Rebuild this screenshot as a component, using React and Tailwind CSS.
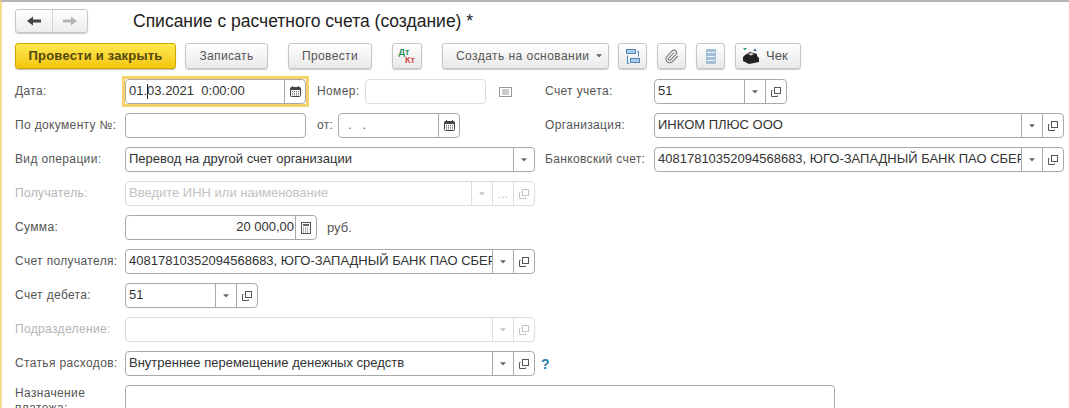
import { Paperclip } from "lucide-react";

const Caret = ({ dim }) => (
  <svg width="6" height="4" viewBox="0 0 6 4">
    <path d="M0 0.3 H6 L3 3.6 Z" fill={dim ? "#c4c4c4" : "#666"} />
  </svg>
);

const OpenIcon = ({ dim }) => (
  <svg width="10" height="10" viewBox="0 0 10 10" fill="none" stroke={dim ? "#c4c4c4" : "#555"}>
    <rect x="3.5" y="0.5" width="6" height="6" />
    <path d="M1.5 3.5 H0.5 V9.5 H6.5 V8.5" />
  </svg>
);

const CalendarIcon = () => (
  <svg width="11" height="11" viewBox="0 0 11 11">
    <rect x="0.5" y="1.5" width="10" height="9" rx="1" fill="#fff" stroke="#444" />
    <rect x="0.5" y="1.5" width="10" height="2.5" fill="#444" />
    <path d="M2.5 0 V2 M8.5 0 V2" stroke="#444" />
    <path d="M2 5.5 H9 M2 7.3 H9 M2 9 H9" stroke="#666" strokeDasharray="1 1" />
  </svg>
);

const CalcIcon = () => (
  <svg width="10" height="12" viewBox="0 0 10 12">
    <rect x="0.5" y="0.5" width="9" height="11" fill="#fff" stroke="#555" />
    <rect x="2" y="2" width="6" height="2" fill="#666" />
    <path d="M2 6 H8 M2 8 H8 M2 10 H8" stroke="#666" strokeDasharray="1 1" />
  </svg>
);

const Seg = ({ children, dim, w = "w-[21px]" }) => (
  <div className={`flex ${w} shrink-0 items-center justify-center border-l ${dim ? "border-[#dcdcdc]" : "border-[#a9a9a9]"}`}>
    {children}
  </div>
);

const Field = ({ w, value, dim, align, placeholder, children }) => (
  <div className={`flex h-[25px] ${w} shrink-0 overflow-hidden rounded-[4px] border bg-white ${dim ? "border-[#dcdcdc]" : "border-[#a9a9a9]"}`}>
    <div className={`min-w-0 flex-1 overflow-hidden whitespace-pre pl-[3px] pr-px text-[13px] leading-[22px] tracking-normal text-[#333] ${align === "right" ? "text-right" : ""}`}>
      {placeholder ? <span className="text-[#c2c2c2]">{placeholder}</span> : value}
    </div>
    {children}
  </div>
);

const Label = ({ w = "w-[110px]", dim, children }) => (
  <div className={`${w} shrink-0 -translate-y-px whitespace-nowrap ${dim ? "text-[#b4b4b4]" : "text-[#555]"}`}>{children}</div>
);

const Row = ({ children }) => <div className="flex h-[25px] items-center">{children}</div>;

const Btn = ({ w, children, cls = "justify-center" }) => (
  <button
    type="button"
    className={`flex h-[26px] ${w} shrink-0 items-center rounded-[3px] border border-[#c6c6c6] bg-gradient-to-b from-white to-[#e9e9e9] text-[#555] shadow-[0_1px_1px_rgba(0,0,0,0.2)] ${cls}`}
  >
    {children}
  </button>
);

const bank = "40817810352094568683, ЮГО-ЗАПАДНЫЙ БАНК ПАО СБЕРБАНК";

export default function App() {
  return (
    <div className="h-[408px] w-[1069px] overflow-hidden border-t-2 border-l-2 border-t-[#b5b5b5] border-l-[#f3dc8c] bg-white font-['Liberation_Sans',sans-serif] text-[12px] tracking-[0.35px]">
      {/* header */}
      <div className="mt-[7px] flex h-[24px] items-center pl-[13px]">
        <div className="flex h-[24px] w-[73px] rounded-[3px] border border-[#c6c6c6] bg-gradient-to-b from-white to-[#ececec] shadow-[0_1px_1px_rgba(0,0,0,0.2)]">
          <div className="flex w-[37px] items-center justify-center border-r border-[#d4d4d4]">
            <svg width="14" height="10" viewBox="0 0 14 10">
              <path d="M0 5 L6 0.5 V3.5 H14 V6.5 H6 V9.5 Z" fill="#444" />
            </svg>
          </div>
          <div className="flex flex-1 items-center justify-center">
            <svg width="14" height="10" viewBox="0 0 14 10">
              <path d="M14 5 L8 0.5 V3.5 H0 V6.5 H8 V9.5 Z" fill="#b5b5b5" />
            </svg>
          </div>
        </div>
        <h1 className="ml-[45px] text-[17.5px] font-normal tracking-normal text-[#222]">Списание с расчетного счета (создание) *</h1>
      </div>

      {/* toolbar */}
      <div className="mt-[10px] flex h-[26px] items-center pl-[13px]">
        <button
          type="button"
          className="flex h-[26px] w-[161px] items-center justify-center rounded-[3px] border border-[#cda800] bg-gradient-to-b from-[#ffe94d] to-[#f3c600] text-[13px] font-bold tracking-[0.2px] text-[#54490d] shadow-[0_1px_1px_rgba(0,0,0,0.25)]"
        >
          Провести и закрыть
        </button>
        <Btn w="w-[83px]" cls="ml-[9px] justify-center">Записать</Btn>
        <Btn w="w-[84px]" cls="ml-[20px] justify-center">Провести</Btn>
        <Btn w="w-[30px]" cls="ml-[20px] justify-center">
          <span className="flex flex-col text-[9px] leading-[8px] tracking-normal">
            <span className="pr-[6px] font-bold text-[#1f8f5c]">Дт</span>
            <span className="pl-[6px] font-bold text-[#d2453d]">Кт</span>
          </span>
        </Btn>
        <Btn w="w-[167px]" cls="ml-[20px] gap-[6px] pl-[13px] tracking-[0.45px]">
          Создать на основании <Caret />
        </Btn>
        <Btn w="w-[29px]" cls="ml-[9px] justify-center">
          <svg width="15" height="15" viewBox="0 0 15 15" fill="none">
            <rect x="1.5" y="0.5" width="9" height="4" fill="#a9cbe6" stroke="#4e86b5" />
            <rect x="5.5" y="9.5" width="9" height="4" fill="#a9cbe6" stroke="#4e86b5" />
            <path d="M2.5 6.5 V14.5 H4 M13.5 7.5 V2.5 H12" stroke="#4e86b5" />
          </svg>
        </Btn>
        <Btn w="w-[29px]" cls="ml-[10px] justify-center">
          <Paperclip size={15} color="#777" strokeWidth={1.7} />
        </Btn>
        <Btn w="w-[29px]" cls="ml-[10px] justify-center">
          <svg width="10" height="15" viewBox="0 0 10 15">
            <rect x="0" y="0" width="10" height="15" rx="1" fill="#a3bfd8" />
            <path d="M1 3.5 H9 M1 7.5 H9 M1 11.5 H9" stroke="#eef4f9" />
          </svg>
        </Btn>
        <Btn w="w-[66px]" cls="ml-[10px] gap-[6px] pl-[6px] text-[13px] tracking-normal">
          <svg width="18" height="17" viewBox="0 0 18 17">
            <path d="M1 0 H5 L3 2.5 Z" fill="#3aa57a" />
            <path d="M11 3 H15 L13 0.5 Z" fill="#3f6f9c" />
            <path d="M3 7 L8 4 L15 6 V8 L17 10 V14 L7 16 L1 13 V9 Z" fill="#222" />
            <path d="M6 6 L9 5 L12 6 L9 7.5 Z" fill="#ddd" />
          </svg>
          Чек
        </Btn>
      </div>

      {/* top part of the form: two columns */}
      <div className="mt-[10px] flex pl-[13px]">
        <div className="flex w-[530px] shrink-0 flex-col gap-[9px]">
          <Row>
            <Label>Дата:</Label>
            <div className="relative outline-[3px] outline-[#f2d46a]">
              <Field w="w-[181px]" value="01.03.2021  0:00:00">
                <Seg>
                  <CalendarIcon />
                </Seg>
              </Field>
              <div className="absolute top-[5px] left-[22px] h-[15px] w-px bg-[#222]" />
            </div>
            <Label w="w-[48px] ml-[11px]">Номер:</Label>
            <Field w="w-[121px]" dim value="" />
            <svg className="ml-[13px]" width="13" height="10" viewBox="0 0 13 10" fill="none" stroke="#999">
              <rect x="0.5" y="0.5" width="12" height="9" />
              <path d="M3 3 H10 M3 5 H10 M3 7 H10" />
            </svg>
          </Row>
          <Row>
            <Label>По документу №:</Label>
            <Field w="w-[181px]" value="" />
            <Label w="w-[21px] ml-[11px]">от:</Label>
            <Field w="w-[122px]" value={<span className="pl-[6px] text-[#666]">.   .</span>}>
              <Seg>
                <CalendarIcon />
              </Seg>
            </Field>
          </Row>
          <Row>
            <Label>Вид операции:</Label>
            <Field w="w-[410px]" value="Перевод на другой счет организации">
              <Seg>
                <Caret />
              </Seg>
            </Field>
          </Row>
        </div>
        <div className="flex flex-col gap-[9px]">
          <Row>
            <Label w="w-[109px]">Счет учета:</Label>
            <Field w="w-[133px]" value="51">
              <Seg>
                <Caret />
              </Seg>
              <Seg>
                <OpenIcon />
              </Seg>
            </Field>
          </Row>
          <Row>
            <Label w="w-[109px]">Организация:</Label>
            <Field w="w-[410px]" value="ИНКОМ ПЛЮС ООО">
              <Seg>
                <Caret />
              </Seg>
              <Seg>
                <OpenIcon />
              </Seg>
            </Field>
          </Row>
          <Row>
            <Label w="w-[109px]">Банковский счет:</Label>
            <Field w="w-[410px]" value={bank}>
              <Seg>
                <Caret />
              </Seg>
              <Seg>
                <OpenIcon />
              </Seg>
            </Field>
          </Row>
        </div>
      </div>

      {/* rest of the form */}
      <div className="mt-[9px] flex flex-col gap-[9px] pl-[13px]">
        <Row>
          <Label dim>Получатель:</Label>
          <Field w="w-[410px]" dim placeholder="Введите ИНН или наименование">
            <Seg dim>
              <Caret dim />
            </Seg>
            <Seg dim>
              <span className="text-[#c4c4c4]">...</span>
            </Seg>
            <Seg dim>
              <OpenIcon dim />
            </Seg>
          </Field>
        </Row>
        <Row>
          <Label>Сумма:</Label>
          <Field w="w-[192px]" align="right" value="20 000,00">
            <Seg>
              <CalcIcon />
            </Seg>
          </Field>
          <span className="ml-[10px] text-[13px] tracking-normal text-[#555]">руб.</span>
        </Row>
        <Row>
          <Label>Счет получателя:</Label>
          <Field w="w-[410px]" value={bank}>
            <Seg>
              <Caret />
            </Seg>
            <Seg>
              <OpenIcon />
            </Seg>
          </Field>
        </Row>
        <Row>
          <Label>Счет дебета:</Label>
          <Field w="w-[133px]" value="51">
            <Seg>
              <Caret />
            </Seg>
            <Seg>
              <OpenIcon />
            </Seg>
          </Field>
        </Row>
        <Row>
          <Label dim>Подразделение:</Label>
          <Field w="w-[410px]" dim value="">
            <Seg dim>
              <Caret dim />
            </Seg>
            <Seg dim>
              <OpenIcon dim />
            </Seg>
          </Field>
        </Row>
        <Row>
          <Label>Статья расходов:</Label>
          <Field w="w-[410px]" value="Внутреннее перемещение денежных средств">
            <Seg>
              <Caret />
            </Seg>
            <Seg>
              <OpenIcon />
            </Seg>
          </Field>
          <span className="ml-[6px] text-[14px] font-bold leading-none tracking-normal text-[#2b7fb0]">?</span>
        </Row>
        <div className="flex">
          <Label>
            <div className="pt-[2px] leading-[15px]">
              Назначение
              <br />
              платежа:
            </div>
          </Label>
          <div className="h-[60px] w-[710px] shrink-0 rounded-[4px] border border-[#a9a9a9] bg-white" />
        </div>
      </div>
    </div>
  );
}
